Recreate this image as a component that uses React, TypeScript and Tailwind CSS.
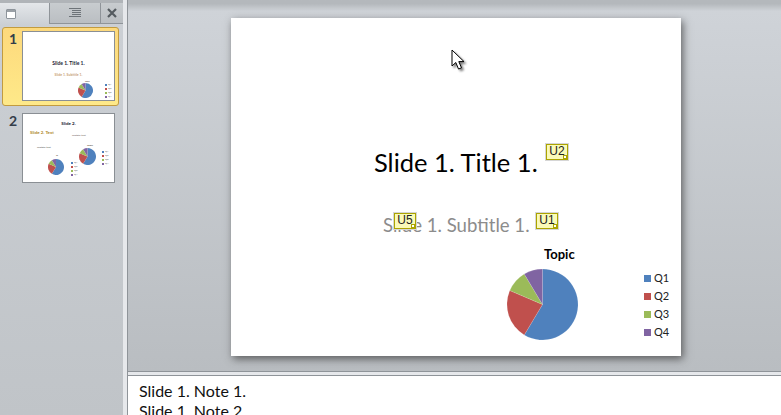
const font = "font-['Lato','Open_Sans',sans-serif]"

const slices = [
  { color: "#4f81bd", from: 0, to: 210.9 },
  { color: "#c0504d", from: 210.9, to: 293.1 },
  { color: "#9bbb59", from: 293.1, to: 329.1 },
  { color: "#8064a2", from: 329.1, to: 360 },
]

const legend = [
  { label: "Q1", color: "bg-[#4f81bd]" },
  { label: "Q2", color: "bg-[#c0504d]" },
  { label: "Q3", color: "bg-[#9bbb59]" },
  { label: "Q4", color: "bg-[#8064a2]" },
]

function slicePath(from: number, to: number) {
  const point = (deg: number) => {
    const rad = (deg * Math.PI) / 180
    return `${(50 + 50 * Math.sin(rad)).toFixed(2)} ${(50 - 50 * Math.cos(rad)).toFixed(2)}`
  }
  const large = to - from > 180 ? 1 : 0
  return `M50 50 L${point(from)} A50 50 0 ${large} 1 ${point(to)} Z`
}

function Pie({ className }: { className: string }) {
  return (
    <svg viewBox="0 0 100 100" className={className}>
      {slices.map((s) => (
        <path key={s.color} d={slicePath(s.from, s.to)} fill={s.color} stroke="#ffffff" strokeOpacity={0.35} strokeWidth={0.5} />
      ))}
    </svg>
  )
}

function Tag({ label, className }: { label: string; className: string }) {
  return (
    <div className={`absolute w-[24px] h-[18px] border border-[#d6d6d6] ${className}`}>
      <div className="relative w-full h-full border border-[#aca400] bg-[#fafab8] text-[12px] leading-[13px] text-center text-[#222] font-['Liberation_Sans',sans-serif]">
        {label}
        <span className="absolute right-0 bottom-0 size-[4px] bg-white border border-[#aca400]" />
      </div>
    </div>
  )
}

function TinyLegend({ className }: { className: string }) {
  return (
    <div className={`absolute flex flex-col gap-[2px] ${className}`}>
      {legend.map((l) => (
        <div key={l.label} className="flex items-center gap-[1px] h-[2px]">
          <span className={`w-[2px] h-[2px] ${l.color}`} />
          <span className="text-[2.5px] leading-[2px] text-[#555]">{l.label}</span>
        </div>
      ))}
    </div>
  )
}

function Thumb1() {
  return (
    <div className="relative w-[93px] h-[70px] bg-white border border-[#8a8f94] overflow-hidden">
      <div className="absolute left-0 right-0 top-[29px] text-center text-[5px] leading-[5px] font-bold text-[#223]">Slide 1. Title 1.</div>
      <div className="absolute left-0 right-0 top-[41px] text-center text-[3.5px] leading-[4px] font-bold text-[#c9a27a]">Slide 1. Subtitle 1.</div>
      <div className="absolute left-[62px] top-[48px] text-[2px] leading-[2px] font-bold text-[#654]">Topic</div>
      <Pie className="absolute left-[55px] top-[51px] size-[15px]" />
      <TinyLegend className="left-[82px] top-[52px]" />
    </div>
  )
}

function Thumb2() {
  return (
    <div className="relative w-[93px] h-[70px] bg-white border border-[#8a8f94] overflow-hidden">
      <div className="absolute left-0 right-0 top-[7px] text-center text-[4.5px] leading-[5px] font-bold text-[#223]">Slide 2.</div>
      <div className="absolute left-[7px] top-[17px] text-[4.5px] leading-[4px] font-bold text-[#b08a30]">Slide 2. Text</div>
      <div className="absolute left-[49px] top-[21px] text-[2.5px] leading-[2px] font-bold text-[#8a7a7a]">Subtitle text</div>
      <div className="absolute left-[14px] top-[33px] text-[2.5px] leading-[2px] font-bold text-[#777]">Subtitle text</div>
      <div className="absolute left-[64px] top-[31px] text-[2.5px] leading-[2px] font-bold text-[#654]">Topic</div>
      <Pie className="absolute left-[56px] top-[34px] size-[17px]" />
      <TinyLegend className="left-[79px] top-[37px]" />
      <div className="absolute left-[33px] top-[41px] text-[2.5px] leading-[2px] font-bold text-[#654]">Q</div>
      <Pie className="absolute left-[25px] top-[45px] size-[16px]" />
      <TinyLegend className="left-[48px] top-[48px]" />
    </div>
  )
}

export default function App() {
  return (
    <div className={`${font} flex w-[781px] h-[415px] overflow-hidden bg-[#c5c9ce]`}>
      {/* Thumbnail pane */}
      <div className="flex flex-col w-[123px] shrink-0 bg-gradient-to-b from-[#ccd0d5] to-[#c0c4c8]">
        <div className="flex h-[24px] pt-[3px] bg-[#b0b4b8]">
          <div className="flex items-center w-[49px] pl-[6px] bg-gradient-to-b from-[#e4e7ea] to-[#ccd0d5]">
            <span className="w-[10px] h-[10px] rounded-[1px] bg-white border border-[#8d949b] shadow-[inset_0_2px_0_#9aa0a6]" />
          </div>
          <div className="flex items-center justify-center w-[52px] border-l border-r border-b border-[#8f9499] bg-gradient-to-b from-[#c8cccf] to-[#babec2]">
            <svg viewBox="0 0 12 10" className="w-[12px] h-[10px]" fill="none" stroke="#6d7378">
              <path d="M0 .5H12M3 2.5H12M3 4.5H12M3 6.5H12M0 8.5H12" />
            </svg>
          </div>
          <div className="flex flex-1 items-center justify-center border-b border-[#8f9499] bg-gradient-to-b from-[#c8cccf] to-[#babec2]">
            <svg viewBox="0 0 10 10" className="size-[10px]" fill="none" stroke="#555b60" strokeWidth={2.2}>
              <path d="M1 1L9 9M9 1L1 9" />
            </svg>
          </div>
        </div>
        <div className="flex flex-col pt-[3px]">
          <div className="flex h-[79px] ml-[2px] mr-[4px] pl-[6px] pt-[3px] rounded-[3px] border border-[#c29b3f] bg-gradient-to-b from-[#fdd97c] to-[#fee989]">
            <span className="w-[13px] text-[14px] leading-[16px] font-bold text-[#333d4a]">1</span>
            <Thumb1 />
          </div>
          <div className="flex h-[70px] mt-[7px] pl-[9px]">
            <span className="w-[13px] text-[14px] leading-[16px] font-bold text-[#333d4a]">2</span>
            <Thumb2 />
          </div>
        </div>
      </div>

      {/* Splitter */}
      <div className="w-[5px] shrink-0 bg-[#e6e8eb] border-r border-[#8f9499]" />

      {/* Editor */}
      <div className="flex flex-col flex-1 min-w-0">
        <div className="h-[372px] shrink-0 border-b border-[#8f9499] bg-gradient-to-b from-[#b4b8bc] from-[1%] via-[#cfd3d8] via-[3%] to-[#b9bdc1]">
          <div className="pl-[103px] pt-[18px]">
            <div className="relative w-[450px] h-[338px] bg-white shadow-[2px_3px_8px_rgba(60,60,60,0.75)]">
              <div className="absolute left-[143px] top-[128px] text-[25.5px] leading-[32px] text-black whitespace-nowrap">Slide 1. Title 1.</div>
              <div className="absolute left-[152px] top-[195px] text-[18.6px] leading-[24px] text-[#8c8c8c] whitespace-nowrap">Slide 1. Subtitle 1.</div>
              <Tag label="U2" className="left-[314px] top-[125px]" />
              <Tag label="U5" className="left-[162px] top-[194px]" />
              <Tag label="U1" className="left-[304px] top-[194px]" />
              <div className="absolute left-[313px] top-[227px] text-[13px] leading-[18px] font-bold text-black">Topic</div>
              <Pie className="absolute left-[276px] top-[251px] size-[71px]" />
              <div className="absolute left-[413px] top-[254px] flex flex-col gap-[6px]">
                {legend.map((l) => (
                  <div key={l.label} className="flex items-center gap-[3px] h-[12px]">
                    <span className={`size-[7px] ${l.color}`} />
                    <span className="text-[11px] leading-[12px] text-[#222]">{l.label}</span>
                  </div>
                ))}
              </div>
              {/* mouse pointer */}
              <svg viewBox="0 0 14 22" className="absolute left-[220px] top-[31px] w-[14px] h-[22px] drop-shadow-[2px_2px_1px_rgba(0,0,0,0.5)]">
                <path d="M1 1V17L4.8 13.5L7.5 20L10.5 18.8L7.8 12.6H13Z" fill="#fff" stroke="#000" strokeWidth={1} />
              </svg>
            </div>
          </div>
        </div>
        <div className="h-[3px] shrink-0 bg-[#e6e8eb]" />
        <div className="h-[40px] shrink-0 px-[11px] pt-[5px] bg-white border-t border-[#8f9499] overflow-hidden text-[16px] leading-[20px] text-[#111]">
          <p>Slide 1. Note 1.</p>
          <p>Slide 1. Note 2.</p>
        </div>
      </div>
    </div>
  )
}
